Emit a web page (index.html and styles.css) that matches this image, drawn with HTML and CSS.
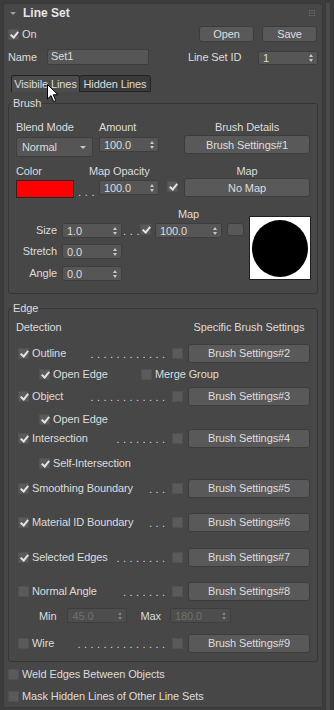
FILE: index.html
```html
<!DOCTYPE html>
<html>
<head>
    <title>Line Set</title>
    <link rel="stylesheet" href="styles.css">
</head>
<body>
<div class="frame">
    <div class="rollout">
        <div class="rollout-head">
            <span class="twist"></span>
            <span class="rollout-title">Line Set</span>
            <svg class="grip" width="6" height="6" viewBox="0 0 6 6">
                <rect x="0" y="0" width="1.2" height="1.2"/><rect x="2.4" y="0" width="1.2" height="1.2"/><rect x="4.8" y="0" width="1.2" height="1.2"/>
                <rect x="0" y="2.4" width="1.2" height="1.2"/><rect x="2.4" y="2.4" width="1.2" height="1.2"/><rect x="4.8" y="2.4" width="1.2" height="1.2"/>
                <rect x="0" y="4.8" width="1.2" height="1.2"/><rect x="2.4" y="4.8" width="1.2" height="1.2"/><rect x="4.8" y="4.8" width="1.2" height="1.2"/>
            </svg>
        </div>

        <div class="row-on">
            <span class="cb on"></span><span class="lbl">On</span>
            <button class="btn btn-file open">Open</button>
            <button class="btn btn-file">Save</button>
        </div>

        <div class="row-name">
            <span class="name-lbl">Name</span>
            <div class="textbox">Set1</div>
            <span class="id-lbl">Line Set ID</span>
            <div class="spin id-spin"><span>1</span><span class="arrows"></span></div>
        </div>

        <div class="tabs">
            <div class="tab active">Visibile Lines</div>
            <div class="tab">Hidden Lines</div>
        </div>

        <!-- Brush -->
        <fieldset class="group brush">
            <legend>Brush</legend>
            <div class="brush-top">
                <span>Blend Mode</span>
                <span>Amount</span>
                <span class="center details">Brush Details</span>

                <div class="dropdown">Normal<span class="drop-arrow"></span></div>
                <div class="spin s-row2"><span>100.0</span><span class="arrows"></span></div>
                <button class="btn wide b-row2">Brush Settings#1</button>

                <span>Color</span>
                <span class="map-opacity">Map Opacity</span>
                <span class="center details">Map</span>

                <div class="swatch-wrap"><span class="swatch"></span><span class="small-dots">. . .</span></div>
                <div class="spin s-row4"><span>100.0</span><span class="arrows"></span></div>
                <span class="cb on c-row4"></span>
                <button class="btn wide">No Map</button>
            </div>

            <div class="brush-size">
                <span class="map-lbl">Map</span>
                <div class="preview"><div class="preview-dot"></div></div>

                <span class="side-lbl">Size</span>
                <div class="spin"><span>1.0</span><span class="arrows"></span></div>
                <span class="small-dots size-dots">. . .</span>
                <span class="cb on size-cb"></span>
                <div class="spin map-spin"><span>100.0</span><span class="arrows"></span></div>
                <span class="map-btn"></span>

                <span class="side-lbl">Stretch</span>
                <div class="spin"><span>0.0</span><span class="arrows"></span></div>

                <span class="side-lbl">Angle</span>
                <div class="spin"><span>0.0</span><span class="arrows"></span></div>
            </div>
        </fieldset>

        <!-- Edge -->
        <fieldset class="group edge">
            <legend>Edge</legend>
            <div class="edge-head">
                <span class="grow">Detection</span>
                <span class="head-r">Specific Brush Settings</span>
            </div>

            <div class="erow r-outline">
                <span class="cb on"></span><span class="lbl">Outline</span>
                <span class="dots">. . . . . . . . . . . .</span>
                <span class="cb"></span><button class="btn bs">Brush Settings#2</button>
            </div>
            <div class="erow sub r-open1">
                <span class="cb on"></span><span class="lbl open-lbl">Open Edge</span>
                <span class="cb"></span><span class="lbl">Merge Group</span>
            </div>
            <div class="erow r-object">
                <span class="cb on"></span><span class="lbl">Object</span>
                <span class="dots">. . . . . . . . . . . .</span>
                <span class="cb"></span><button class="btn bs">Brush Settings#3</button>
            </div>
            <div class="erow sub r-open2">
                <span class="cb on"></span><span class="lbl">Open Edge</span>
            </div>
            <div class="erow r-inter">
                <span class="cb on"></span><span class="lbl">Intersection</span>
                <span class="dots">. . . . . . . .</span>
                <span class="cb"></span><button class="btn bs">Brush Settings#4</button>
            </div>
            <div class="erow sub r-self">
                <span class="cb on"></span><span class="lbl">Self-Intersection</span>
            </div>
            <div class="erow r-smooth">
                <span class="cb on"></span><span class="lbl">Smoothing Boundary</span>
                <span class="dots">. . .</span>
                <span class="cb"></span><button class="btn bs">Brush Settings#5</button>
            </div>
            <div class="erow r-mat">
                <span class="cb on"></span><span class="lbl">Material ID Boundary</span>
                <span class="dots">. . .</span>
                <span class="cb"></span><button class="btn bs">Brush Settings#6</button>
            </div>
            <div class="erow r-sel">
                <span class="cb on"></span><span class="lbl">Selected Edges</span>
                <span class="dots">. . . . . . . .</span>
                <span class="cb"></span><button class="btn bs">Brush Settings#7</button>
            </div>
            <div class="erow r-normal">
                <span class="cb"></span><span class="lbl">Normal Angle</span>
                <span class="dots">. . . . . . .</span>
                <span class="cb"></span><button class="btn bs">Brush Settings#8</button>
            </div>
            <div class="minmax">
                <span>Min</span>
                <div class="spin off min-spin"><span>45.0</span><span class="arrows"></span></div>
                <span class="max-lbl">Max</span>
                <div class="spin off max-spin"><span>180.0</span><span class="arrows"></span></div>
            </div>
            <div class="erow r-wire">
                <span class="cb"></span><span class="lbl">Wire</span>
                <span class="dots">. . . . . . . . . . . . . .</span>
                <span class="cb"></span><button class="btn bs">Brush Settings#9</button>
            </div>
        </fieldset>

        <div class="opt-row weld"><span class="cb"></span><span class="lbl">Weld Edges Between Objects</span></div>
        <div class="opt-row mask"><span class="cb"></span><span class="lbl">Mask Hidden Lines of Other Line Sets</span></div>
    </div>
    <div class="scroll-strip"></div>

    <svg class="cursor" width="12" height="19" viewBox="0 0 12 19">
        <path d="M0.5 0.5 L0.5 15 L4 11.6 L6.6 17.6 L8.8 16.7 L6.3 10.8 L11 10.8 Z" fill="#fff" stroke="#000" stroke-width="1"/>
    </svg>
</div>
</body>
</html>
```

FILE: styles.css
```css
* {
    box-sizing: border-box;
}

body {
    margin: 0;
    background-color: #3c3c3c;
    font-family: "Liberation Sans", Arial, sans-serif;
    font-size: 11px;
    letter-spacing: -0.1px;
    color: #dcdcdc;
    overflow: hidden;
}

.frame {
    position: relative;
    display: flex;
    height: 710px;
    padding: 3px 0 0 3px;
}

.rollout {
    width: 320px;
    height: 705px;
    padding: 0 4px;
    background-color: #474747;
    border: 1px solid #393939;
    border-radius: 3px;
}

.scroll-strip {
    width: 6px;
    margin-left: 2px;
    background-color: #4a4a4a;
    border-left: 1px solid #393939;
    border-right: 1px solid #393939;
}

/* rollout title bar */
.rollout-head {
    display: flex;
    align-items: center;
    height: 18px;
}
.twist {
    width: 0;
    height: 0;
    margin: 0 7px 0 2px;
    border-left: 3px solid transparent;
    border-right: 3px solid transparent;
    border-top: 3px solid #a0a0a0;
}
.rollout-title {
    font-size: 12px;
    font-weight: bold;
    letter-spacing: 0;
    color: #e6e6e6;
}
.grip {
    margin-left: auto;
    margin-right: 3px;
    fill: #707070;
}

/* generic controls */
.btn {
    padding: 0;
    background-color: #595959;
    border: 1px solid #3c3c3c;
    border-radius: 3px;
    color: #dedede;
    font: inherit;
    letter-spacing: inherit;
}

.cb {
    position: relative;
    flex-shrink: 0;
    width: 11px;
    height: 11px;
    background-color: #5a5a5a;
    border: 1px solid #515151;
}
.cb.on::after {
    content: "";
    position: absolute;
    left: 3px;
    top: 0;
    width: 3px;
    height: 6px;
    border-right: 2px solid #e4e4e4;
    border-bottom: 2px solid #e4e4e4;
    transform: rotate(40deg);
}

.spin {
    display: flex;
    align-items: center;
    width: 60px;
    height: 15px;
    padding: 0 4px 0 4px;
    background-color: #565656;
    border: 1px solid #3e3e3e;
    border-radius: 2px;
}
.spin .arrows {
    display: flex;
    flex-direction: column;
    gap: 2px;
    margin-left: auto;
}
.spin .arrows::before,
.spin .arrows::after {
    content: "";
    width: 0;
    height: 0;
    border-left: 2px solid transparent;
    border-right: 2px solid transparent;
}
.spin .arrows::before {
    border-bottom: 3px solid #c8c8c8;
}
.spin .arrows::after {
    border-top: 3px solid #c8c8c8;
}
.spin.off {
    background-color: #4d4d4d;
    color: #707070;
}
.spin.off .arrows::before {
    border-bottom-color: #808080;
}
.spin.off .arrows::after {
    border-top-color: #808080;
}

.lbl {
    margin-left: 3px;
    white-space: nowrap;
}

/* top rows */
.row-on {
    display: flex;
    align-items: center;
    height: 16px;
    margin-top: 4px;
}
.btn-file {
    width: 55px;
    height: 16px;
}
.btn-file.open {
    margin-left: auto;
    margin-right: 8px;
}
.row-on .btn-file:last-child {
    margin-right: 1px;
}

.row-name {
    display: flex;
    align-items: center;
    height: 16px;
    margin-top: 7px;
}
.name-lbl {
    width: 39px;
}
.textbox {
    width: 102px;
    height: 16px;
    padding: 0 3px;
    line-height: 13px;
    background-color: #565656;
    border: 1px solid #3e3e3e;
    border-radius: 2px;
}
.id-lbl {
    width: 70px;
    margin-left: 39px;
}
.id-spin {
    margin-top: 2px;
    height: 14px;
}

/* tabs */
.tabs {
    display: flex;
    margin: 10px 0 0 3px;
}
.tab {
    height: 17px;
    line-height: 16px;
    text-align: center;
    border: 1px solid #232323;
    border-bottom: none;
    border-radius: 3px 3px 0 0;
    background-color: #3a3a3a;
}
.tab.active {
    width: 69px;
    background-color: #4c4c4c;
}
.tab + .tab {
    width: 72px;
    margin-left: -1px;
    border-bottom: 1px solid #232323;
}

/* group boxes */
.group {
    min-width: 0;
    margin: 5px 0 0;
    padding: 0 0 8px;
    border: 1px solid #363636;
    border-radius: 3px;
}
.group legend {
    margin-left: 3px;
    padding: 0 1px;
    line-height: 13px;
}
.group.brush {
    padding-bottom: 12px;
}
.group.edge {
    margin-top: 8px;
}

/* brush */
.brush-top {
    display: grid;
    grid-template-columns: 83px 60px 25px 126px;
    grid-template-rows: 14px 30px 14px 20px;
    align-items: start;
    padding: 10px 0 0 7px;
    line-height: 14px;
}
.center {
    text-align: center;
}
.details {
    grid-column: 4;
}
.dropdown {
    display: flex;
    align-items: center;
    width: 77px;
    height: 20px;
    margin-top: 3px;
    padding: 0 6px 0 5px;
    background-color: #555555;
    border: 1px solid #3e3e3e;
    border-radius: 2px;
}
.drop-arrow {
    margin-left: auto;
    width: 0;
    height: 0;
    border-left: 3px solid transparent;
    border-right: 3px solid transparent;
    border-top: 3px solid #c8c8c8;
}
.s-row2 {
    margin-top: 3px;
}
.btn.wide {
    grid-column: 4;
    width: 126px;
    height: 19px;
}
.b-row2 {
    margin-top: 1px;
}
.map-opacity {
    margin-left: -10px;
    white-space: nowrap;
}
.swatch-wrap {
    display: flex;
    align-items: flex-end;
    margin-top: 2px;
}
.swatch {
    width: 58px;
    height: 18px;
    background-color: #ff0000;
    border: 1px solid #262626;
}
.small-dots {
    margin-left: 4px;
    line-height: 11px;
    word-spacing: 0.8px;
    white-space: nowrap;
}
.s-row4 {
    margin-top: 2px;
}
.c-row4 {
    margin: 3px 0 0 8px;
}

.brush-size {
    display: grid;
    grid-template-columns: 46px 60px 18px 15px 72px 22px 62px;
    grid-template-rows: 14px 17px 21px 22px;
    align-items: end;
    margin-top: 9px;
    padding-left: 7px;
}
.map-lbl {
    grid-column: 5;
    width: 67px;
    text-align: center;
    line-height: 14px;
}
.preview {
    display: flex;
    align-items: center;
    justify-content: center;
    grid-column: 7;
    grid-row: 1 / 5;
    align-self: start;
    width: 62px;
    height: 64px;
    margin-top: 9px;
    background-color: #ffffff;
    border: 1px solid #202020;
}
.preview-dot {
    width: 56px;
    height: 57px;
    border-radius: 50%;
    background-color: #000000;
}
.side-lbl {
    grid-column: 1;
    padding-right: 5px;
    line-height: 15px;
    text-align: right;
}
.size-dots {
    margin: 0 0 1px 1px;
}
.size-cb {
    align-self: center;
}
.map-spin {
    width: 67px;
}
.map-btn {
    align-self: center;
    width: 17px;
    height: 13px;
    background-color: #585858;
    border: 1px solid #3e3e3e;
    border-radius: 3px;
}

/* edge */
.edge-head {
    display: flex;
    align-items: center;
    height: 14px;
    margin-top: 5px;
    padding: 0 7px 0 7px;
}
.grow {
    flex: 1;
}
.head-r {
    width: 122px;
    text-align: center;
}

.erow {
    display: flex;
    align-items: center;
    height: 20px;
    padding: 0 7px 0 9px;
}
.erow.sub {
    height: 14px;
    padding-left: 30px;
}
.erow .dots {
    flex: 1;
    overflow: hidden;
    text-align: right;
    white-space: nowrap;
    word-spacing: 0.6px;
    padding-top: 2px;
}
.erow .dots + .cb {
    margin-left: 7px;
}
.btn.bs {
    width: 122px;
    height: 19px;
    margin-left: 5px;
}
.open-lbl {
    width: 88px;
}

.r-outline { margin-top: 9px; }
.r-open1   { margin-top: 4px; }
.r-object  { margin-top: 5px; }
.r-open2   { margin-top: 6px; }
.r-inter   { margin-top: 2px; }
.r-self    { margin-top: 8px; }
.r-smooth  { margin-top: 8px; }
.r-mat     { margin-top: 14px; }
.r-sel     { margin-top: 15px; }
.r-normal  { margin-top: 14px; }
.r-wire    { margin-top: 10px; }

.minmax {
    display: flex;
    align-items: center;
    height: 15px;
    margin-top: 7px;
    padding-left: 30px;
}
.min-spin {
    margin-left: 11px;
}
.max-lbl {
    margin-left: 13px;
}
.max-spin {
    width: 61px;
    margin-left: 9px;
}

/* bottom options */
.opt-row {
    display: flex;
    align-items: center;
    height: 14px;
}
.weld {
    margin-top: 5px;
}
.mask {
    margin-top: 8px;
}

.cursor {
    position: absolute;
    left: 47px;
    top: 84px;
}
```
